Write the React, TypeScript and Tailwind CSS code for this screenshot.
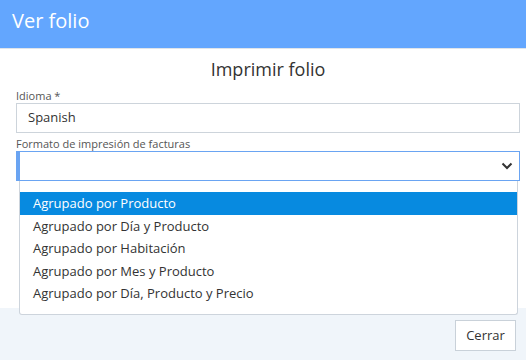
import React from "react";

const opciones = [
  "Agrupado por Producto",
  "Agrupado por Día y Producto",
  "Agrupado por Habitación",
  "Agrupado por Mes y Producto",
  "Agrupado por Día, Producto y Precio",
];

export default function App() {
  return (
    <div
      className="w-[526px] h-[360px] flex flex-col bg-white text-[#333]"
      style={{ fontFamily: '"Open Sans", "Noto Sans", sans-serif' }}
    >
      {/* Header */}
      <div className="h-[49px] shrink-0 bg-[#63a6fe] border-b border-[#dfe4ea] px-3 pt-[7px]">
        <span className="text-[20px] leading-[28px] text-white">Ver folio</span>
      </div>

      {/* Body */}
      <div className="flex-1 pl-4 pr-[6px] pt-[8px]">
        <h2 className="text-center text-[18px] leading-[24px] text-[#333]">Imprimir folio</h2>

        <div className="mt-[8px] text-[11px] leading-[14px] text-[#555]">Idioma *</div>
        <div className="h-[30px] border border-[#cdd4db] flex items-center px-[11px] text-[13px]">
          Spanish
        </div>

        <div className="mt-[4px] text-[11px] leading-[14px] text-[#555]">Formato de impresión de facturas</div>
        <div className="relative">
          <div className="h-[30px] border border-[#6aa4f2] border-l-[4px] border-l-[#6aa4f2] flex items-center justify-end pr-[6px]">
            <svg width="12" height="8" viewBox="0 0 12 8" fill="none">
              <path d="M1.5 1.5 L6 6 L10.5 1.5" stroke="#333" strokeWidth="2" />
            </svg>
          </div>

          {/* Dropdown */}
          <div className="absolute left-[3px] right-[2px] top-[30px] z-10 bg-white border border-t-0 border-[#cdd4dc] rounded-b-[3px] pt-[11px] pb-[9px]">
            {opciones.map((o, i) => (
              <div
                key={o}
                className={
                  "px-[13px] text-[13px] leading-[22.5px] " +
                  (i === 0 ? "bg-[#078ae0] text-white" : "text-[#333]")
                }
              >
                {o}
              </div>
            ))}
          </div>
        </div>
      </div>

      {/* Footer */}
      <div className="h-[52px] shrink-0 bg-[#f0f5fa] flex items-start justify-end pr-[10px] pt-[12px]">
        <button className="w-[61px] h-[31px] bg-white border border-[#c9d1d9] text-[13px] text-[#333]">
          Cerrar
        </button>
      </div>
    </div>
  );
}
